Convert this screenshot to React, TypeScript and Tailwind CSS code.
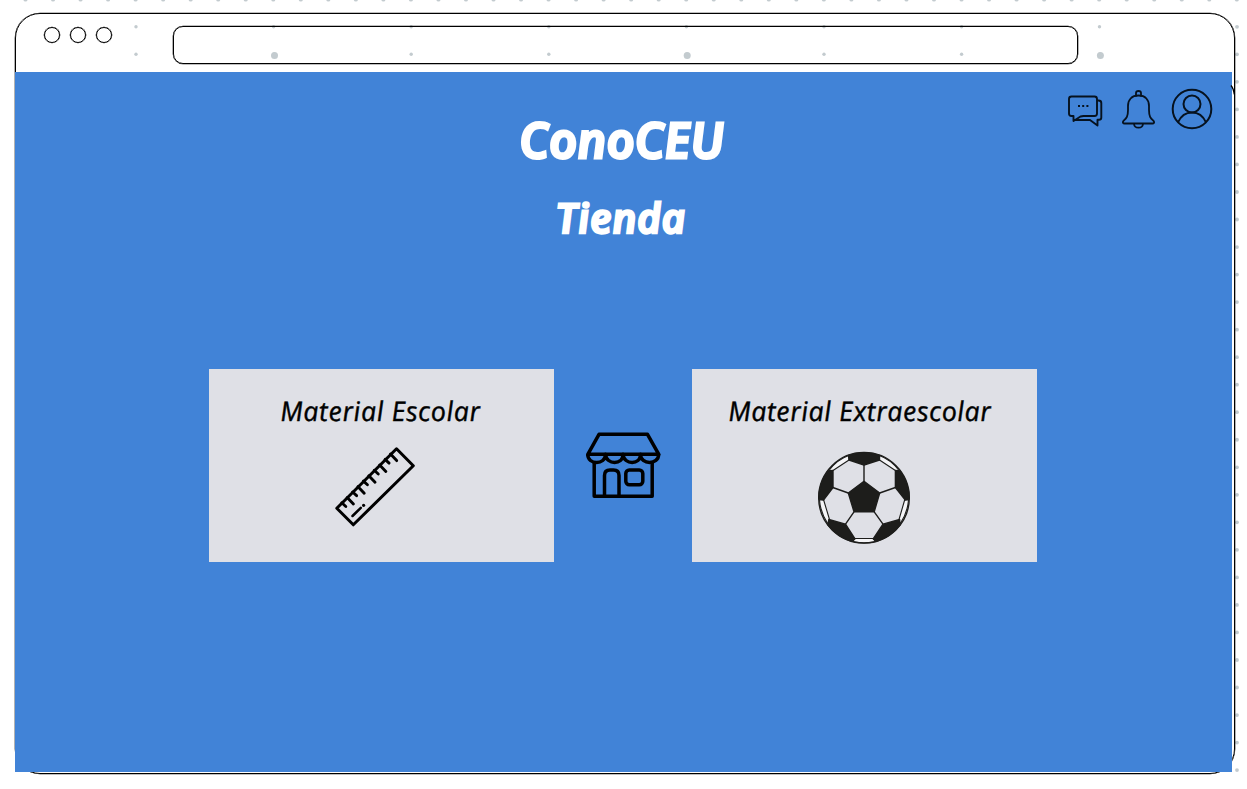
import React from "react";

const columns = Array.from({ length: 45 }, (_, i) => 25.5 + i * 27.53);
const rows = Array.from({ length: 28 }, (_, i) => 26.8 + i * 27.53);

function CanvasDots() {
  return (
    <svg className="pointer-events-none absolute inset-0" width="1247" height="789" fill="#c3cbcf">
      {columns.map((x) => (
        <circle key={x} cx={x} cy="-0.6" r="2.1" />
      ))}
      {rows.map((y) => (
        <circle key={y} cx="1237" cy={y} r="1.9" />
      ))}
      {[136, 273.6, 411.2, 548.8, 686.4, 824, 961.6, 1099.5].map((x) => (
        <g key={x}>
          <circle cx={x} cy="26.8" r="1.7" />
          <circle cx={x} cy="54.3" r="1.7" />
        </g>
      ))}
      {[274.5, 687.2, 1100.4].map((x) => (
        <circle key={x} cx={x} cy="55.5" r="3.5" />
      ))}
    </svg>
  );
}

function ChatIcon() {
  return (
    <svg width="36" height="34" viewBox="1067 94 36 34" fill="none" stroke="#06121f" strokeWidth="1.9" strokeLinejoin="round">
      <path d="M1071.5 96.5h23q2.5 0 2.5 2.5v14.5q0 2.500-2.500 2.500h-11l-3 .5-7 4.500v-5h-2q-2.500 0-2.500-2.500v-14.500q0-2.500 2.500-2.500z" />
      <path d="M1097 100.500h1.500q2.800 0 2.800 2.500v14.500q0 2.300-2.300 2.300h-1.500v5.700l-7.500-5.500h-16" />
      <path d="M1078 106h2M1082.200 106h2M1086.400 106h2" strokeWidth="1.800" />
    </svg>
  );
}

function BellIcon() {
  return (
    <svg width="34" height="40" viewBox="1122 89 34 40" fill="none" stroke="#06121f" strokeWidth="1.8" strokeLinejoin="round">
      <path d="M1136 96.500v-3.500q0-2 2.500-2t2.500 2v3.500" />
      <path d="M1138.500 95.500c-7 0-10.500 4.500-10.500 10.500v4c0 6.500-1.500 8-4.300 10.700-1.600 1.700-.5 2.800.8 2.800h28c1.300 0 2.400-1.100.8-2.800-2.800-2.700-4.300-4.200-4.300-10.700v-4c0-6-3.500-10.500-10.500-10.500z" />
      <path d="M1134 123.700q.3 4 4.500 4t4.500-4" />
    </svg>
  );
}

function UserIcon() {
  return (
    <svg width="42" height="42" viewBox="1171 88 42 42" fill="none" stroke="#06121f" strokeWidth="2">
      <circle cx="1192" cy="109" r="19.300" />
      <circle cx="1192" cy="104" r="8.500" />
      <path d="M1178 122.300c3-6.500 8-9.800 14-9.800s11 3.300 14 9.800" />
    </svg>
  );
}

const rulerPairs = [0, 1, 2, 3, 4];

function RulerIcon() {
  return (
    <svg width="82" height="82" viewBox="334 446 82 82" fill="none" stroke="#000" strokeWidth="3" strokeLinejoin="round" strokeLinecap="round">
      <path d="M396.500 448.800l16.800 17-60 59-16.500-16.500z" />
      {rulerPairs.map((i) => (
        <g key={i} transform={`translate(${i * 10.82} ${i * -10.85})`} strokeWidth="2.900">
          <path d="M341.800 502.800l4 3.700" />
          <path d="M347.200 497.500l6.200 6.500" />
        </g>
      ))}
      <path d="M352.500 516l8.300-8.200" strokeWidth="2.500" />
      <circle cx="363.600" cy="505.300" r="1.600" fill="#000" stroke="none" />
    </svg>
  );
}

function ShopIcon() {
  return (
    <svg width="78" height="68" viewBox="584 431 78 68" fill="none" stroke="#000" strokeWidth="3.500" strokeLinejoin="round">
      <path d="M599 434.300h48.500l11.300 20h-71z" />
      <path d="M587.700 454.300c0 11 17.800 11 17.800 0c1 11 17.500 11 17.500 0c1 11 17.500 11 17.500 0c0 11 18.200 11 18.200 0" />
      <path d="M594.200 462v34.200h58v-34.200" />
      <path d="M604.500 496v-20.500q0-5.500 5.500-5.500h3.500q5.500 0 5.500 5.500v20.500" />
      <rect x="625.800" y="470" width="17" height="14.700" rx="3.500" />
    </svg>
  );
}

function BallIcon() {
  return (
    <svg width="94" height="94" viewBox="817 451 94 94" fill="none" stroke="#1d1d1b" strokeWidth="1.4" strokeLinejoin="round">
      <g fill="#f5f5f7" strokeWidth="1.100">
        <path d="M850 455L849 460L833 470.500L829 470.500Q837 459.500 850 455z" />
        <path d="M878 455L879.500 460L895.400 470.500L899 470.500Q891 459.500 878 455z" />
        <path d="M819.500 500L823.500 499.500L829.500 519.500L828 524Q820.500 513 819.500 500z" />
        <path d="M908.500 500L904.800 499.500L899 519.500L900 524Q907.500 513 908.500 500z" />
        <path d="M852.500 541.500L855 538.500H873.200L876 541.500Q864 544.500 852.500 541.500z" />
      </g>
      <circle cx="864" cy="497.700" r="45.300" />
      <g fill="#1d1d1b">
        <path d="M864 481.300l15.700 11.700-5.500 18.800h-20.200l-5.700-18.800z" />
        <path d="M848.500 455.500Q864 450 879.500 455.500L879.500 460L864 465L849 460z" />
        <path d="M895.400 470.500L900 471Q909.500 485 909.200 499L905.300 500L895.400 487.500z" />
        <path d="M833 470.500L828 471Q818.500 485 818.800 499L823.500 500L833 487.500z" />
        <path d="M828.800 519.500L845.500 524.200L855 538.800L852 541.500Q837 536.500 828 525z" />
        <path d="M899.600 519.500L883 524.200L873.200 538.800L876 541.500Q891 536.500 900 525z" />
      </g>
      <path d="M864 465v16.500M848.300 493l-15.500-5.500M879.700 493l15.700-5.500M854 511.800l-8.500 12.400M874.200 511.800l8.800 12.400" />
    </svg>
  );
}

function WindowBar() {
  return (
    <header className="flex h-[58px] items-start pt-3 pl-7">
      <div className="flex gap-2.5 pt-px">
        <span className="size-4 rounded-full border-[1.5px] border-black ring-[0.3px] ring-black" />
        <span className="size-4 rounded-full border-[1.5px] border-black ring-[0.3px] ring-black" />
        <span className="size-4 rounded-full border-[1.5px] border-black ring-[0.3px] ring-black" />
      </div>
      <div className="ml-[61px] h-[38px] w-[905px] rounded-[10px] border-[1.5px] border-black ring-[0.3px] ring-black" />
    </header>
  );
}

function MaterialCard({ title, children }: { title: React.ReactNode; children: React.ReactNode }) {
  return (
    <section className="flex h-[192.5px] w-[344.5px] flex-col bg-[#dfe0e6]">
      {title}
      {children}
    </section>
  );
}

export default function App() {
  return (
    <div className="relative h-[789px] w-[1247px] overflow-hidden bg-white pt-[13px] pl-[15px] font-['Open_Sans','Noto_Sans',sans-serif] italic">
      <CanvasDots />
      <div className="relative h-[761px] w-[1220px] rounded-[25px] border border-black ring-[0.3px] ring-black">
        <WindowBar />
        <svg className="absolute top-[70px] right-[-1px]" width="5" height="12" fill="none" stroke="#000" strokeWidth="1.300">
          <path d="M1 1.500q2.500 3 3.300 9" />
        </svg>
        <main className="-ml-px flex h-[700px] w-[1217px] flex-col bg-[#4183d7]">
          <div className="flex h-[60px] items-start justify-end pt-4 pr-[19px]">
            <div className="pt-1.5">
              <ChatIcon />
            </div>
            <div className="ml-[19px] pt-px">
              <BellIcon />
            </div>
            <div className="ml-[15px]">
              <UserIcon />
            </div>
          </div>
          <div className="-mt-[26px] flex flex-col items-center pr-[5px] text-white">
            <h1 className="h-[68px] skew-x-[5deg] text-[49px] leading-[67px] font-semibold tracking-[0.2px] whitespace-nowrap [-webkit-text-stroke:3px_white] [stroke-linejoin:round]">
              ConoCEU
            </h1>
            <h2 className="mt-[16px] h-[56px] skew-x-[5deg] text-[41px] leading-[55px] font-semibold tracking-[0.6px] whitespace-nowrap [-webkit-text-stroke:2.5px_white] [stroke-linejoin:round]">
              Tienda
            </h2>
          </div>
          <div className="mt-[123px] flex pl-[194px] text-black">
            <MaterialCard
              title={
                <h3 className="mt-[22px] ml-[71px] h-10 w-fit skew-x-[4deg] text-[27px] leading-10 font-medium tracking-[0.5px] whitespace-nowrap [-webkit-text-stroke:0.4px_black]">
                  Material Escolar
                </h3>
              }
            >
              <div className="mt-[15px] ml-[125px]">
                <RulerIcon />
              </div>
            </MaterialCard>
            <div className="w-[138.5px] pt-[62px] pl-[30.500px]">
              <ShopIcon />
            </div>
            <MaterialCard
              title={
                <h3 className="mt-[22px] ml-[36px] h-10 w-fit skew-x-[4deg] text-[27px] leading-10 font-medium tracking-[0.450px] whitespace-nowrap [-webkit-text-stroke:0.4px_black]">
                  Material Extraescolar
                </h3>
              }
            >
              <div className="mt-5 ml-[125px]">
                <BallIcon />
              </div>
            </MaterialCard>
          </div>
        </main>
      </div>
    </div>
  );
}
